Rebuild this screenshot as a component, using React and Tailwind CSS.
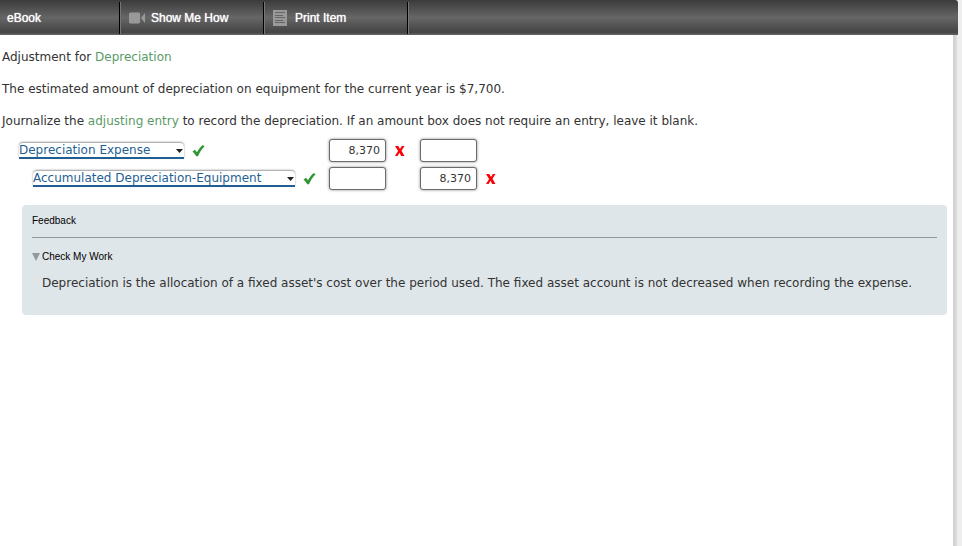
const accounts = ["Depreciation Expense", "Accumulated Depreciation-Equipment"];

function Check() {
  return (
    <svg className="ml-2 h-3.5 w-3.5 shrink-0" viewBox="0 0 14 14" role="img" aria-label="Correct">
      <path d="M0.500 7.500 3 5.800 5 8.300C6.500 5.300 8.500 2.800 10.800 1L12.500 2.300C9.800 5 7.600 8.400 6 12.300H4.300C3.300 10.500 2 9 0.500 7.500Z" fill="#2e9632" />
    </svg>
  );
}

function Cross() {
  return (
    <svg className="ml-2 h-3.5 w-3.5 shrink-0" viewBox="0 0 14 14" role="img" aria-label="Incorrect">
      <path d="M1 2H4.300L6 5 7.800 2H10.500L7.500 6.700 10.500 12H7.200L5.500 8.700 3.600 12H1L4.100 7Z" fill="#fb0007" />
    </svg>
  );
}

function Account({ value, label, width }) {
  return (
    <div className="flex items-center">
      <div className={`relative h-4 ${width}`}>
        <select
          aria-label={label}
          defaultValue={value}
          className="block h-4 w-full appearance-none rounded-t border-b-2 border-[#1f5f93] bg-white pr-4 text-[12px] leading-[14px] text-[#1f5f93] shadow-[0_-1px_2px_#999] outline-none"
        >
          {accounts.map((a) => (
            <option key={a}>{a}</option>
          ))}
        </select>
        <svg className="pointer-events-none absolute top-1.5 right-0 h-1 w-2" viewBox="0 0 8 4" aria-hidden="true">
          <path d="M0 0h7L3.500 4Z" fill="#222" />
        </svg>
      </div>
      <Check />
    </div>
  );
}

function Amount({ value, label }) {
  return (
    <div className="flex items-center">
      <input
        aria-label={label}
        defaultValue={value}
        className="h-[23px] w-[57px] rounded-[3px] border border-[#6b6b6b] bg-white pr-[5px] text-right text-[11px] text-[#333] shadow-[0_0_3px_#888] outline-none"
      />
      {value ? <Cross /> : null}
    </div>
  );
}

function Tool({ children }) {
  return (
    <button className="flex h-8 w-36 items-center gap-1.5 border-l border-black pl-[9px] shadow-[inset_1px_0_0_#777] [text-shadow:0_0_1px_#fff]">
      {children}
    </button>
  );
}

export default function App() {
  return (
    <div className="flex min-h-screen flex-col bg-[#eee] pr-1 font-['DejaVu_Sans',sans-serif] text-[12px] leading-4 text-[#333]">
      <nav className="flex h-[35px] items-center rounded-tr-[3px] bg-[linear-gradient(#3b3b3b,#666_50%,#444_92%,#666)] font-['Liberation_Sans',sans-serif] text-white">
        <button className="h-8 w-[119px] pl-[7px] text-left [text-shadow:0_0_1px_#fff]">eBook</button>
        <Tool>
          <svg className="h-3 w-4" viewBox="0 0 16 12" fill="#999" aria-hidden="true">
            <rect y="0.500" width="11" height="11" rx="1.500" />
            <path d="M12 6 16 1v10Z" />
          </svg>
          Show Me How
        </Tool>
        <Tool>
          <svg className="mr-0.5 h-4 w-3.5" viewBox="0 0 14 16" aria-hidden="true">
            <path d="M0 0h14v16H0Z" fill="#999" />
            <path d="M2 2.500h10M2 5.500h8M2 7.500h10M2 10.500h8M2 12.500h10" stroke="#666" />
          </svg>
          Print Item
        </Tool>
        <div className="h-8 border-l border-black" />
        <div className="h-8 w-px bg-[#777]" />
      </nav>
      <div className="mr-px flex flex-1 bg-[linear-gradient(to_right,#bbb_99%,#ddd)] pr-1">
        <main className="flex-1 bg-white pt-3.5">
          <div className="space-y-4 pl-0.5">
            <p>
              Adjustment for <a href="#depreciation" className="text-[#5b9a68]">Depreciation</a>
            </p>
            <p>The estimated amount of depreciation on equipment for the current year is $7,700.</p>
            <p>
              Journalize the <a href="#adjusting-entry" className="text-[#5b9a68]">adjusting entry</a> to record the
              depreciation. If an amount box does not require an entry, leave it blank.
            </p>
          </div>
          <div className="mt-2.5 grid grid-cols-[310px_91px_91px] items-center gap-y-[5px] pl-[19px]">
            <Account value={accounts[0]} label="Debit account" width="w-[165px]" />
            <Amount value="8,370" label="Row 1 debit" />
            <Amount value="" label="Row 1 credit" />
            <div className="pl-3.5">
              <Account value={accounts[1]} label="Credit account" width="w-[262px]" />
            </div>
            <Amount value="" label="Row 2 debit" />
            <Amount value="8,370" label="Row 2 credit" />
          </div>
          <section className="mt-[15px] mr-1.5 ml-[22px] rounded bg-[#dfe6e9] px-2.5 pt-2 pb-6">
            <h2 className="border-b border-[#8f999c] pb-2 font-['Liberation_Sans',sans-serif] text-[10px] text-black">
              Feedback
            </h2>
            <button className="mt-[11px] flex items-center gap-0.5 font-['Liberation_Sans',sans-serif] text-[10px] text-black">
              <svg className="h-2 w-2" viewBox="0 0 8 8" aria-hidden="true">
                <path d="M0 0h8L4 8Z" fill="#90999b" />
              </svg>
              Check My Work
            </button>
            <p className="mt-2.5 pl-2.5">
              Depreciation is the allocation of a fixed asset's cost over the period used. The fixed asset account is not
              decreased when recording the expense.
            </p>
          </section>
        </main>
      </div>
    </div>
  );
}
